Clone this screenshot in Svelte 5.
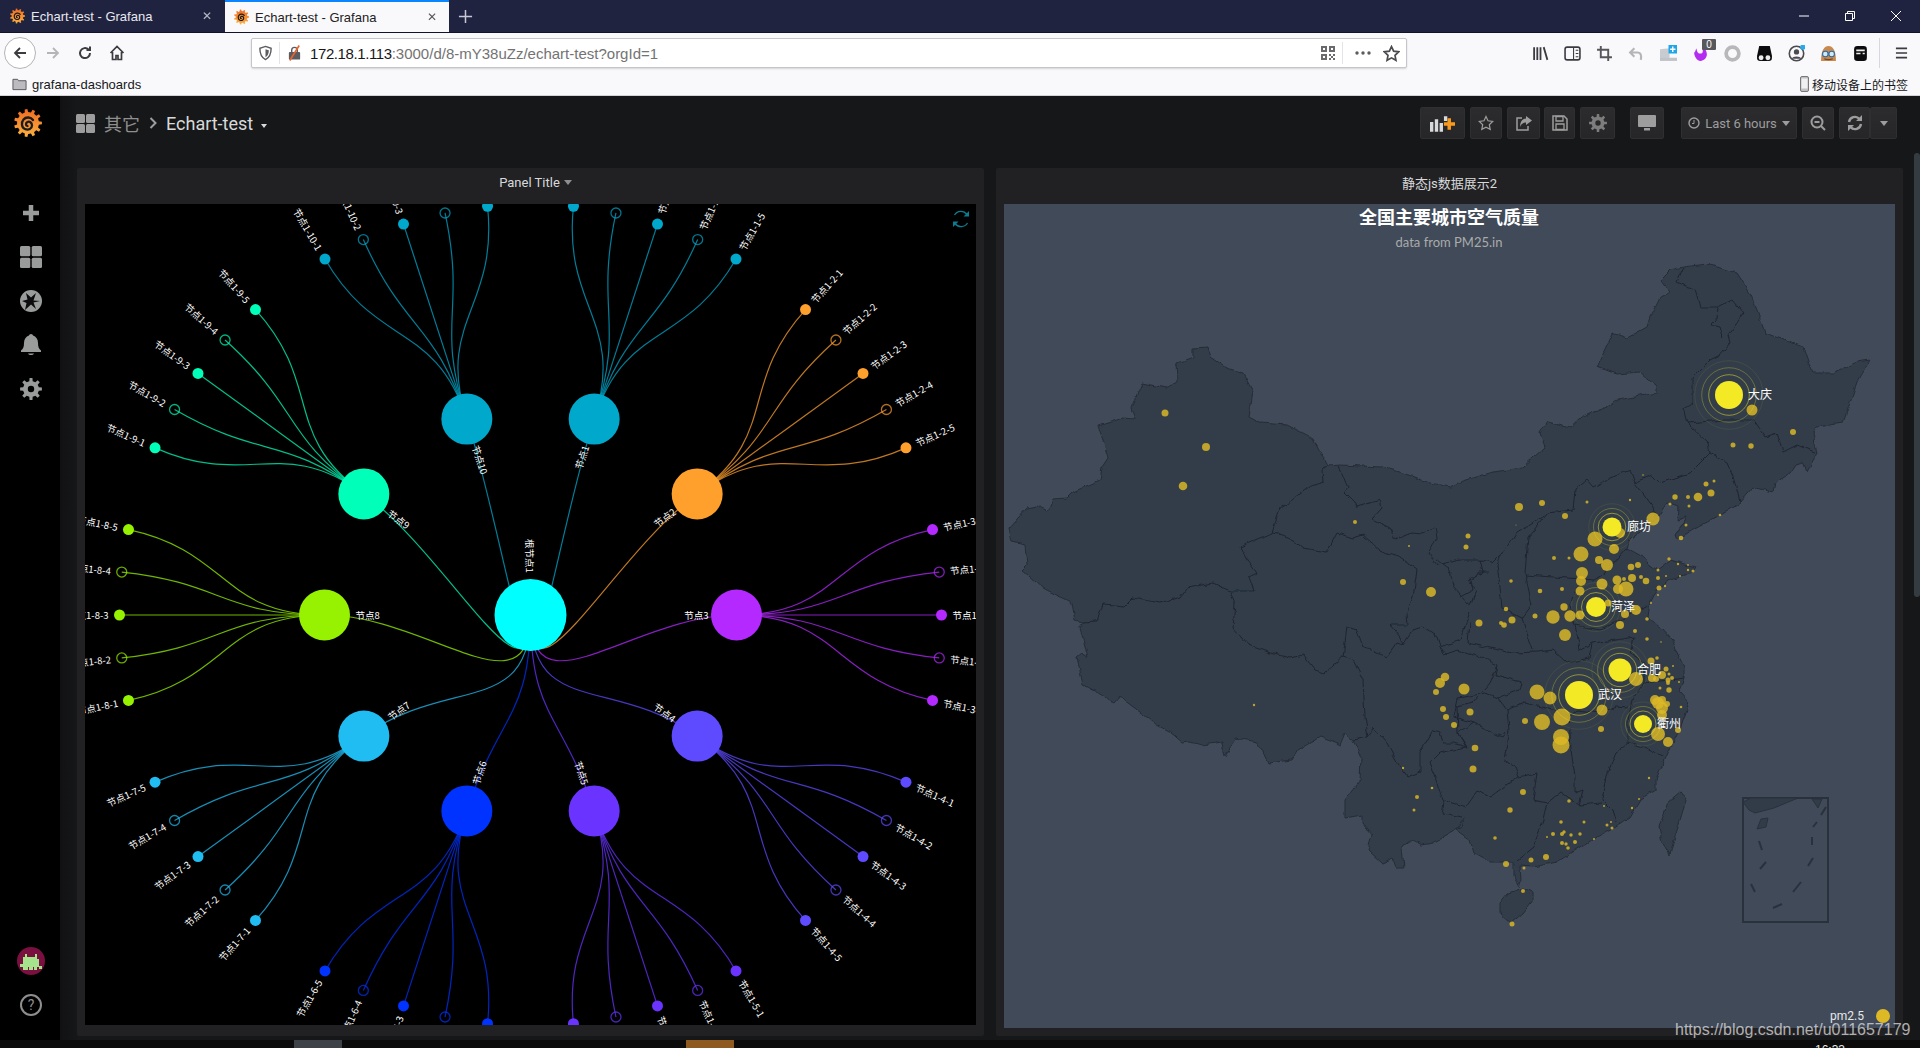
<script>
  // radial tree, same layout rules as the echarts one: 10 branches, 5 leaves each
  const cx = 530.5;
  const cy = 615;
  const colors = {
    1: '#00a8cc', 2: '#ffa02d', 3: '#b429ff', 4: '#5f4bff', 5: '#6a33ff',
    6: '#0033ff', 7: '#20bdf3', 8: '#96f200', 9: '#00ffb8', 10: '#00a8cc'
  };

  function polar(angle, r) {
    const rad = (angle * Math.PI) / 180;
    return [cx + r * Math.cos(rad), cy - r * Math.sin(rad)];
  }

  function labelAt(angle, r, name, inward) {
    const [x, y] = polar(angle, r);
    const left = Math.cos((angle * Math.PI) / 180) < 0;
    const rot = left ? 180 - angle : -angle;
    const anchor = left !== inward ? 'end' : 'start';
    return { x, y, rot, anchor, name };
  }

  function curve(a1, r1, a2, r2, startAngle) {
    const mid = (r1 + r2) / 2;
    const p0 = polar(a1, r1);
    const c1 = polar(startAngle, mid);
    const c2 = polar(a2, mid);
    const p1 = polar(a2, r2);
    return `M${p0} C${c1} ${c2} ${p1}`;
  }

  const branches = [];
  for (let i = 1; i <= 10; i++) {
    const angle = ((3 - i) * 36 + 360) % 360;
    const [x, y] = polar(angle, 206);
    const leaves = [];
    for (let j = 1; j <= 5; j++) {
      const a = angle + 12 - (j - 1) * 6;
      const [lx, ly] = polar(a, 411);
      leaves.push({
        x: lx, y: ly, hollow: j % 2 === 0,
        path: curve(angle, 206, a, 411, angle),
        label: labelAt(a, 422, `节点1-${i}-${j}`, false)
      });
    }
    const left = Math.cos((angle * Math.PI) / 180) < -0.5;
    branches.push({
      i, x, y, leaves, color: colors[i],
      path: `M${cx},${cy} C${cx},${cy + 103} ${polar(angle, 103)} ${x},${y}`,
      label: labelAt(angle, left ? 175 : 178, `节点${i}`, true)
    });
  }

  function gear(c, r1, r2, teeth, hole) {
    let d = '';
    const step = (Math.PI * 2) / teeth;
    for (let i = 0; i < teeth; i++) {
      const a = i * step;
      const pts = [[a - step * 0.27, r2], [a - step * 0.17, r1], [a + step * 0.17, r1], [a + step * 0.27, r2]];
      for (const [t, r] of pts) {
        d += (d ? 'L' : 'M') + (c + r * Math.cos(t)).toFixed(2) + ',' + (c + r * Math.sin(t)).toFixed(2);
      }
    }
    d += 'Z';
    if (hole) d += `M${c - hole},${c}a${hole},${hole} 0 1,0 ${hole * 2},0a${hole},${hole} 0 1,0 ${-hole * 2},0Z`;
    return d;
  }

  // map is traced in page coordinates, the svg viewBox starts at the chart corner
  const land = `1193,348 1208,347 1211,357 1227,368 1243,373 1253,392 1249,417 1260,423 1287,425 1313,438 1328,466 1340,465 1383,467 1403,473 1430,483 1450,487 1460,482 1493,472 1522,468 1545,447 1540,433 1547,422 1570,428 1582,417 1607,407 1617,400 1657,393 1657,387 1640,372 1617,374 1597,367 1613,333 1627,338 1647,327 1650,317 1660,297 1670,292 1660,280 1670,270 1683,267 1707,264 1737,273 1750,293 1757,310 1765,333 1803,347 1810,367 1813,373 1833,373 1857,362 1870,360 1857,383 1843,423 1817,427 1813,433 1817,453 1807,472 1803,463 1795,465 1790,473 1775,483 1773,492 1753,487 1740,502 1720,515 1693,530 1677,540 1675,535 1687,517 1677,520 1678,507 1667,503 1655,520 1630,540 1627,548 1643,557 1648,563 1657,570 1670,560 1697,567 1693,573 1673,578 1657,590 1650,603 1648,617 1663,630 1672,640 1685,667 1685,678 1679,692 1689,703 1681,727 1668,753 1656,780 1656,790 1640,800 1630,817 1616,827 1592,840 1557,862 1533,867 1520,866 1521,880 1519,887 1513,877 1513,862 1490,862 1474,853 1470,840 1456,830 1465,817 1462,827 1455,830 1433,843 1422,845 1413,840 1402,847 1404,868 1397,868 1393,858 1382,863 1368,850 1372,835 1362,823 1362,815 1345,818 1345,800 1360,780 1361,757 1353,740 1345,733 1340,745 1320,737 1298,750 1292,760 1268,763 1262,750 1257,742 1235,738 1225,757 1222,742 1203,745 1190,742 1183,743 1170,732 1157,725 1148,718 1128,703 1120,697 1115,703 1098,693 1083,685 1077,657 1082,653 1088,657 1080,628 1083,622 1075,620 1072,603 1043,588 1022,570 1027,565 1025,545 1012,542 1009,528 1027,508 1037,506 1048,511 1053,499 1067,498 1073,492 1100,480 1102,467 1108,458 1103,440 1098,426 1123,418 1135,419 1131,408 1142,383 1167,388 1178,382 1177,363 1193,357`;
  const taiwan = `1681,792 1687,797 1681,817 1672,847 1670,855 1662,842 1659,827 1668,803`;
  const hainan = `1523,888 1533,892 1533,900 1523,913 1511,923 1500,913 1500,903 1508,893`;

  const borders = [
    `1328,466 1323,470 1324,482 1310,486 1293,500 1280,508 1272,533 1240,547 1247,560 1257,573 1249,577 1254,591 1230,591 1213,583 1187,588 1180,597 1160,603 1133,598 1125,606 1103,604 1097,621 1083,622`,
    `1339,466 1348,488 1345,492 1355,502 1357,507 1380,500 1382,508 1372,519 1390,528 1395,540 1403,535 1413,532 1422,533 1435,528 1437,538 1428,553 1437,565 1460,560 1480,560 1493,562 1502,553 1517,533 1527,527 1548,513 1573,510 1575,490 1587,480 1593,487 1613,477 1630,470 1635,483 1652,475 1660,483 1690,473 1710,453 1708,443 1687,423 1683,408 1693,402 1693,377 1710,360 1720,355 1730,343 1728,335 1743,313 1732,300 1718,307 1700,307 1695,290 1677,282 1683,268`,
    `1718,307 1717,320 1712,325 1720,327 1723,337`,
    `1687,423 1725,420 1753,420 1765,437 1777,433 1783,452 1797,445 1817,453`,
    `1710,453 1727,463 1733,477 1737,490 1740,502`,
    `1635,483 1643,493 1653,507 1655,518`,
    `1272,533 1283,535 1293,540 1303,548 1327,552 1337,533 1353,538 1363,535 1380,550 1400,558 1417,570 1413,597 1407,613 1408,625 1390,625 1400,637 1403,645`,
    `1343,657 1347,627 1357,630 1363,647 1387,657 1397,643 1403,645 1413,630 1422,627 1437,637 1443,655 1458,650 1480,657 1498,665 1496,675 1521,682`,
    `1230,592 1235,603 1233,628 1248,645 1270,653 1290,658 1303,655 1315,670 1325,673 1343,657`,
    `1343,657 1353,660 1363,680 1365,717 1368,737 1373,727 1387,743 1400,767 1407,777 1420,772 1420,753 1433,730 1440,732 1443,743 1452,743 1467,747 1458,733 1457,707 1473,703 1490,683 1497,667`,
    `1368,737 1362,738 1353,740`,
    `1437,560 1450,570 1453,587 1467,603 1470,605 1477,590 1468,582 1480,572 1488,572`,
    `1470,612 1460,640 1440,647 1447,655`,
    `1480,560 1483,573 1470,577 1473,590 1460,597`,
    `1502,553 1497,565 1500,587 1502,608 1522,618`,
    `1548,513 1528,537 1525,573 1532,605 1522,618 1525,628 1533,650`,
    `1525,575 1568,578 1595,580 1603,575 1627,548`,
    `1577,587 1570,605 1575,625 1600,630 1650,605`,
    `1575,625 1580,650 1592,643`,
    `1470,623 1468,643 1512,653 1537,652 1553,650 1567,663 1589,658 1592,643 1616,640 1634,637 1630,653 1644,662 1644,683 1632,700 1628,720 1628,743`,
    `1507,710 1525,703 1553,710 1569,717 1577,710 1600,713 1616,707 1628,708`,
    `1521,682 1519,690 1498,698 1507,710 1509,730 1504,760 1515,767 1519,777 1537,773 1533,800 1547,803`,
    `1569,717 1571,750 1575,777 1575,793 1583,790 1579,805 1602,803`,
    `1628,743 1616,753 1606,777 1602,800 1612,810 1616,823`,
    `1628,743 1644,747 1656,753 1664,757`,
    `1547,803 1541,827 1533,847 1517,860`,
    `1547,803 1561,792 1579,805`,
    `1442,800 1466,807 1478,790 1490,797 1509,783 1519,777`,
    `1430,763 1444,803 1442,813 1462,817`,
    `1430,763 1440,753 1466,747 1458,733 1474,723 1502,737 1505,733`,
    `1458,698 1454,717 1474,723`,
    `1498,698 1486,693 1458,698`,
    `1644,683 1685,678`
  ];

  const insetShapes = [
    `1743,802 1751,798 1798,798 1774,808 1755,813 1749,810`,
    `1812,799 1822,799 1818,808`,
    `1761,819 1768,818 1766,827 1757,829`
  ];
  const insetDashes = [
    [1826, 807, 1821, 815], [1817, 822, 1813, 827], [1812, 837, 1812, 845], [1759, 841, 1762, 850],
    [1813, 858, 1808, 866], [1766, 862, 1760, 869], [1801, 882, 1793, 892], [1751, 884, 1755, 892], [1782, 904, 1773, 908]
  ];

  const dots = [
    [1165,413,3.5],[1206,447,4],[1183,486,4.3],[1355,522,2],[1409,546,1],[1403,582,3],[1431,592,5],[1479,623,3.5],
    [1445,677,4.3],[1440,683,5],[1436,692,3],[1464,689,5.5],[1443,709,3],[1470,712,3.5],[1446,717,3],[1454,725,3],
    [1475,748,3.3],[1473,769,3.5],[1403,768,1.2],[1432,788,1.3],[1417,797,2],[1414,810,1.5],[1495,838,1.8],[1254,705,1.2],
    [1752,410,5.5],[1793,432,3],[1751,446,2.7],[1733,445,2.5],[1706,484,2.5],[1714,481,1.5],[1711,493,3.5],[1698,497,4.3],
    [1688,497,2],[1675,497,2.7],[1670,504,1.5],[1689,506,1.5],[1720,515,1.3],[1686,525,1.5],[1681,538,2.3],[1653,519,6.5],
    [1630,500,1.2],[1643,475,0.8],[1587,502,1.5],[1542,503,3],[1519,507,4],[1565,516,3],[1516,525,0.5],[1468,536,2.5],
    [1466,547,2.5],[1620,533,5],[1595,539,7.5],[1614,549,5],[1581,554,7.5],[1554,558,2],[1569,558,1.5],[1599,560,4],
    [1607,565,6],[1631,567,3.3],[1638,565,3],[1582,573,6],[1581,581,5],[1511,581,1.8],[1602,584,5.5],[1617,580,4.5],
    [1624,579,2],[1632,578,4],[1641,577,2],[1646,581,3.3],[1658,570,1.5],[1658,578,2],[1666,576,1],[1669,559,1.7],
    [1678,564,1.2],[1688,565,0.9],[1688,570,1.2],[1693,571,1.5],[1680,576,1],[1659,588,2.5],[1665,586,1.2],[1658,595,1],
    [1626,589,7.5],[1618,589,5],[1580,591,4.5],[1562,589,2],[1540,591,2.3],[1506,609,2.2],[1501,623,2],[1504,625,2.8],
    [1512,620,3.5],[1535,616,2.5],[1564,607,3.7],[1553,617,6.7],[1570,616,5.7],[1580,615,4.5],[1608,603,3.5],[1636,610,5],
    [1625,614,4],[1651,603,1],[1647,619,1.8],[1620,625,4],[1635,631,2],[1565,635,6],[1647,639,1.8],[1661,642,0.8],
    [1537,692,7.5],[1550,698,6.5],[1562,717,8.5],[1542,722,8],[1525,721,3],[1602,710,5.5],[1601,729,3],[1561,737,8],
    [1561,745,8.5],[1636,679,7],[1651,661,3.5],[1657,658,1.8],[1673,666,1],[1666,669,2.5],[1662,675,4],[1652,678,4],
    [1656,679,3],[1669,674,1.5],[1668,680,2.5],[1672,678,2],[1668,683,2],[1679,682,1],[1660,688,1.5],[1669,690,2.7],
    [1655,700,5],[1658,703,6],[1662,700,4],[1667,704,3],[1681,707,1.3],[1662,708,6],[1662,715,5],[1658,734,7],
    [1668,742,5],[1678,730,3],[1649,778,1.2],[1639,799,1],[1632,808,1.2],[1604,806,1],[1569,801,1.8],[1523,792,3],
    [1510,810,2.7],[1561,822,1.8],[1584,822,1.5],[1607,825,1.5],[1611,822,1],[1612,828,1.5],[1594,839,1],[1564,832,1.7],
    [1562,834,2],[1553,834,2],[1547,837,1],[1571,835,1.7],[1580,834,1.7],[1562,843,2],[1566,844,1.7],[1575,842,2],
    [1568,848,1.8],[1546,857,3],[1531,860,2.5],[1506,864,3],[1524,868,1.5],[1523,891,2],[1512,924,2.5]
  ];

  const topCities = [
    { name: '大庆', x: 1729, y: 395, r: 14, lx: 1748 },
    { name: '廊坊', x: 1612, y: 527, r: 9.5, lx: 1627 },
    { name: '菏泽', x: 1596, y: 607, r: 10, lx: 1611 },
    { name: '合肥', x: 1620, y: 670, r: 11.5, lx: 1637 },
    { name: '武汉', x: 1579, y: 695, r: 14, lx: 1598 },
    { name: '衢州', x: 1643, y: 724, r: 9, lx: 1657 }
  ];

  const logoGear = gear(14, 14, 11, 11, 0);
  const settingsGear = gear(10, 10, 7.2, 8, 3);
  const sideGear = gear(11, 11, 8, 8, 3.2);
</script>

{#snippet logo(cls)}
  <svg class={cls} viewBox="0 0 28 28">
    <defs>
      <linearGradient id="gf" x1="0" y1="1" x2="0" y2="0">
        <stop offset="0" stop-color="#fbb040" />
        <stop offset="1" stop-color="#ee6b22" />
      </linearGradient>
    </defs>
    <path d={logoGear} fill="url(#gf)" />
    <path d="M19 11c-2-3-7-3.500-9.500-.5s-2 8 1.500 9.500 7-.5 7-3.500-2.500-4.500-4.500-3.500-2 3.500 0 4" fill="none" stroke="#1b1b1d" stroke-width="2.300" stroke-linecap="round" />
  </svg>
{/snippet}

<div class="page">
  <div class="tabbar">
    <div class="tab">
      {@render logo('favicon')}
      <span class="tab-title">Echart-test - Grafana</span>
      <span class="tab-x">✕</span>
    </div>
    <div class="tab active">
      {@render logo('favicon')}
      <span class="tab-title">Echart-test - Grafana</span>
      <span class="tab-x">✕</span>
    </div>
    <svg class="newtab" viewBox="0 0 16 16"><path d="M8 1v14M1 8h14" stroke="#c8c8d4" stroke-width="1.600" /></svg>
    <div class="winctl">
      <svg viewBox="0 0 12 12"><path d="M1 6h10" stroke="#fff" /></svg>
      <svg viewBox="0 0 12 12"><path d="M1.500 3.500h7v7h-7zM3.500 3.500v-2h7v7h-2" fill="none" stroke="#fff" /></svg>
      <svg viewBox="0 0 12 12"><path d="M1 1l10 10M11 1L1 11" stroke="#fff" /></svg>
    </div>
  </div>

  <div class="toolbar">
    <div class="back">
      <svg viewBox="0 0 16 16"><path d="M14 8H3M8 3L3 8l5 5" fill="none" stroke="#3b3b40" stroke-width="1.800" /></svg>
    </div>
    <div class="tb-btn">
      <svg viewBox="0 0 16 16"><path d="M2 8h11M8 3l5 5-5 5" fill="none" stroke="#b5b5b8" stroke-width="1.800" /></svg>
    </div>
    <div class="tb-btn">
      <svg viewBox="0 0 16 16"><path d="M13 8a5 5 0 1 1-1.500-3.500M13 1.500V5H9.500" fill="none" stroke="#3b3b40" stroke-width="2" /></svg>
    </div>
    <div class="tb-btn">
      <svg viewBox="0 0 16 16"><path d="M1.500 8L8 1.500 14.500 8M3.500 7v7.500h3.500v-4h2v4h3.500V7" fill="none" stroke="#3b3b40" stroke-width="1.700" /></svg>
    </div>

    <div class="urlbox">
      <svg class="shield" viewBox="0 0 16 16"><path d="M8 1l6 2c0 6-1.500 10-6 12C3.500 13 2 9 2 3z" fill="none" stroke="#5b5b60" stroke-width="1.500" /><path d="M8 4l3.500 1c0 3.500-1 6-3.500 7.500z" fill="#5b5b60" /></svg>
      <span class="url-sep"></span>
      <svg class="lock" viewBox="0 0 16 16"><rect x="2" y="7" width="12" height="8" rx="1" fill="#5b5b60" /><path d="M5 7V5a3 3 0 0 1 6 0v2" fill="none" stroke="#5b5b60" stroke-width="1.500" /><path d="M3 16L13 0" stroke="#e8642c" stroke-width="1.800" /></svg>
      <span class="url"><b>172.18.1.113</b>:3000/d/8-mY38uZz/echart-test?orgId=1</span>
      <svg class="qr" viewBox="0 0 14 14">
        <path d="M0 0h6v6H0zM2 2v2h2V2zM8 0h6v6H8zM10 2v2h2V2zM0 8h6v6H0zM2 10v2h2v-2zM8 8h2v2H8zM12 8h2v2h-2zM10 10h2v2h-2zM8 12h2v2H8zM12 12h2v2h-2z" fill="#6a6a6e" fill-rule="evenodd" />
      </svg>
      <span class="url-sep right"></span>
      <svg class="dots" viewBox="0 0 16 4"><circle cx="2" cy="2" r="1.700" fill="#5b5b60" /><circle cx="8" cy="2" r="1.700" fill="#5b5b60" /><circle cx="14" cy="2" r="1.700" fill="#5b5b60" /></svg>
      <svg class="star" viewBox="0 0 16 16"><path d="M8 1.500l2 4.300 4.700.6-3.400 3.300.9 4.700L8 12.100l-4.200 2.300.9-4.700L1.300 6.400 6 5.800z" fill="none" stroke="#4a4a4f" stroke-width="1.600" /></svg>
    </div>

    <div class="addons">
      <div class="addon"><svg viewBox="0 0 16 16"><path d="M2 2v12M5 2v12M8 2v12M11 2l3.500 12" stroke="#3b3b40" stroke-width="1.700" /></svg></div>
      <div class="addon"><svg viewBox="0 0 16 16"><rect x="1" y="2" width="14" height="12" rx="2" fill="none" stroke="#3b3b40" stroke-width="1.500" /><path d="M9 2v12M11 5h2.500M11 8h2.500M11 11h2.500" stroke="#3b3b40" /></svg></div>
      <div class="addon"><svg viewBox="0 0 16 16"><path d="M4.500 1v10.500H15M1 4.500h10.500V15" fill="none" stroke="#55555a" stroke-width="1.800" /></svg></div>
      <div class="addon"><svg viewBox="0 0 16 16"><path d="M6 3L2 7l4 4M2 7h7c3 0 4 3 3 7" fill="none" stroke="#b5b5b8" stroke-width="2" /></svg></div>
      <div class="addon"><svg viewBox="0 0 16 16"><path d="M0 4l9-1v10l-9 2z" fill="#c8ccd0" /><rect y="12" width="16" height="3" fill="#c0c4c8" /><rect x="8" width="8" height="8" fill="#1ea7e8" /><path d="M12 1.500v5M9.500 4h5" stroke="#fff" stroke-width="1.300" /></svg></div>
      <div class="addon badge-wrap">
        <svg viewBox="0 0 16 16"><path d="M2 7c1 0 1-1 2-4 1 3 1 5 4 5 3 0 2-3 2-6 2 1 4 3 4 7 0 3-3 6-6 6S2 11 2 7z" fill="#b32cf0" /></svg>
        <span class="badge">0</span>
      </div>
      <div class="addon"><svg viewBox="0 0 16 16"><circle cx="8" cy="8" r="6" fill="none" stroke="#b8b8ba" stroke-width="3.500" /></svg></div>
      <div class="addon"><svg viewBox="0 0 16 16"><path d="M3 1h10l2 9v2a3 3 0 0 1-3 3H4a3 3 0 0 1-3-3v-2z" fill="#0c0c0e" /><circle cx="4.800" cy="12" r="2.300" fill="#eee" /><circle cx="11.200" cy="12" r="2.300" fill="#eee" /></svg></div>
      <div class="addon avatar-wrap">
        <svg viewBox="0 0 16 16"><circle cx="8" cy="8" r="6.800" fill="none" stroke="#4a4a4f" stroke-width="1.500" /><circle cx="8" cy="6.500" r="2.500" fill="#4a4a4f" /><path d="M3.500 13c1-3 8-3 9 0" fill="#4a4a4f" /><circle cx="14" cy="2" r="2.500" fill="#2aa8ee" /></svg>
      </div>
      <div class="addon"><svg viewBox="0 0 16 16"><path d="M1 15c0-10 3-14 7-14s7 4 7 14z" fill="#c9884d" /><circle cx="5" cy="8.500" r="2.600" fill="#cfe9f7" stroke="#2b6ca8" /><circle cx="11" cy="8.500" r="2.600" fill="#cfe9f7" stroke="#2b6ca8" /><path d="M4 13c2 1 6 1 8 0" stroke="#7a4a20" fill="none" /></svg></div>
      <div class="addon"><svg viewBox="0 0 16 16"><rect x="2" y="1" width="12" height="14" rx="3" fill="#0c0c0e" /><path d="M4 5h8M4 8h4M10 8h2" stroke="#eee" stroke-width="1.600" /></svg></div>
    </div>
    <span class="tb-sep"></span>
    <svg class="burger" viewBox="0 0 14 14"><path d="M1 2h12M1 7h12M1 12h12" stroke="#3b3b40" stroke-width="1.800" /></svg>
  </div>

  <div class="bookmarks">
    <svg class="folder" viewBox="0 0 16 16"><path d="M1 3h5l1 1.500h8V14H1z" fill="#bcbcc0" stroke="#55555a" /></svg>
    <span class="bm">grafana-dashoards</span>
    <span class="spacer"></span>
    <svg class="phone" viewBox="0 0 9 16"><rect x="0.500" y="0.500" width="8" height="15" rx="1.500" fill="#c0c0c4" stroke="#77777c" /><rect x="1.500" y="2.500" width="6" height="10" fill="#f0f0f2" /></svg>
    <span class="bm mobile">移动设备上的书签</span>
  </div>

  <div class="app">
    <nav class="sidemenu">
      <div class="side-logo">{@render logo('gflogo')}</div>
      <div class="side-item"><svg viewBox="0 0 18 18"><path d="M9 1v16M1 9h16" stroke="#9a9c9c" stroke-width="4.500" /></svg></div>
      <div class="side-item"><svg class="big" viewBox="0 0 22 22"><rect width="10.300" height="10.300" rx="1.500" fill="#9a9c9c" /><rect x="11.700" width="10.300" height="10.300" rx="1.500" fill="#9a9c9c" /><rect y="11.700" width="10.300" height="10.300" rx="1.500" fill="#9a9c9c" /><rect x="11.700" y="11.700" width="10.300" height="10.300" rx="1.500" fill="#9a9c9c" /></svg></div>
      <div class="side-item"><svg class="big" viewBox="0 0 22 22"><circle cx="11" cy="11" r="11" fill="#9a9c9c" /><path d="M16 3l-2.500 7.500L20 11l-6.500 1.500L16 19l-5-4.500L5 20l1.500-7L2 11l5.500-1.500L6 3l5 4.500z" fill="#0c0c0e" /></svg></div>
      <div class="side-item"><svg class="big" viewBox="0 0 22 22"><path d="M11 0c1 0 2 1 2 1.500 3 1 5 3.500 5 7.500 0 4 1 6 3 7.500V18H1v-1.500C3 15 4 13 4 9c0-4 2-6.500 5-7.500C9 1 10 0 11 0zM8 19.500h6c-1 2-5 2-6 0z" fill="#9a9c9c" /></svg></div>
      <div class="side-item"><svg class="big" viewBox="0 0 22 22"><path d={sideGear} fill="#9a9c9c" fill-rule="evenodd" /></svg></div>
      <div class="side-item bottom">
        <svg class="avatar" viewBox="0 0 28 28">
          <ellipse cx="14" cy="14" rx="14" ry="14" fill="#7a1040" />
          <path d="M8 7h2v3h8V7h2v5h2v7h3v3h-3v-2h-2v3h-3v-3h-1v3h-4v-3h-1v3H6v-3H3v-3h3v-7h2z" fill="#a5e48c" />
        </svg>
      </div>
      <div class="side-item">
        <span class="help">?</span>
      </div>
    </nav>

    <main class="main">
      <header class="navbar">
        <div class="crumbs">
          <svg class="crumb-grid" viewBox="0 0 19 19"><rect width="9" height="9" rx="1.500" fill="#9d9d9d" /><rect x="10" width="9" height="9" rx="1.500" fill="#9d9d9d" /><rect y="10" width="9" height="9" rx="1.500" fill="#9d9d9d" /><rect x="10" y="10" width="9" height="9" rx="1.500" fill="#9d9d9d" /></svg>
          <span class="folder-name">其它</span>
          <svg class="chev" viewBox="0 0 8 12"><path d="M1.500 1l5 5-5 5" fill="none" stroke="#9d9d9d" stroke-width="2" /></svg>
          <span class="dash-name">Echart-test</span>
          <span class="caret-sm"></span>
        </div>
        <div class="nav-btns">
          <button class="nbtn w-add">
            <svg viewBox="0 0 26 18"><path d="M0 8h3.500v10H0zM5 5h3.500v13H5zM10 9h3.500v9H10zM14.500 2H18v5h-3.500z" fill="#d8d9da" /><path d="M20 4v12M14.500 10H26" stroke="#f79a1f" stroke-width="3.600" /></svg>
          </button>
          <button class="nbtn w-star"><svg viewBox="0 0 16 16"><path d="M8 1.500l2 4.300 4.700.6-3.400 3.300.9 4.700L8 12.100l-4.200 2.300.9-4.700L1.300 6.400 6 5.800z" fill="none" stroke="#9d9d9d" stroke-width="1.200" /></svg></button>
          <button class="nbtn w-share"><svg viewBox="0 0 16 16"><path d="M6 3H1v12h11v-4" fill="none" stroke="#9d9d9d" stroke-width="1.500" /><path d="M10 1l6 4.500L10 10V7.500C7 7.500 5 9 4 12c0-5 2-8 6-8.500z" fill="#9d9d9d" /></svg></button>
          <button class="nbtn w-save"><svg viewBox="0 0 16 16"><path d="M1 1h11l3 3v11H1z" fill="none" stroke="#9d9d9d" stroke-width="1.500" /><path d="M4 1.500h7V6H4zM4 9h8v5.500H4z" fill="none" stroke="#9d9d9d" stroke-width="1.300" /></svg></button>
          <button class="nbtn w-gear"><svg viewBox="0 0 20 20"><path d={settingsGear} fill="#7d7d7d" fill-rule="evenodd" /></svg></button>
          <button class="nbtn w-tv"><svg viewBox="0 0 18 16"><rect width="18" height="12" rx="1" fill="#9d9d9d" /><path d="M6 13h6v2.500H6z" fill="#9d9d9d" /></svg></button>
          <button class="nbtn w-time">
            <svg viewBox="0 0 12 12"><circle cx="6" cy="6" r="5" fill="none" stroke="#9d9d9d" stroke-width="1.400" /><path d="M6 3v3.500H4" fill="none" stroke="#9d9d9d" /></svg>
            <span>Last 6 hours</span>
            <span class="caret"></span>
          </button>
          <button class="nbtn w-zoom"><svg viewBox="0 0 16 16"><circle cx="7" cy="7" r="5.500" fill="none" stroke="#9d9d9d" stroke-width="2" /><path d="M4.500 7h5M11 11l4 4" stroke="#9d9d9d" stroke-width="2" /></svg></button>
          <div class="refresh-group">
            <button class="nbtn w-refresh"><svg viewBox="0 0 16 16"><path d="M2 7a6 6 0 0 1 10.500-3M14 9a6 6 0 0 1-10.500 3" fill="none" stroke="#9d9d9d" stroke-width="2.400" /><path d="M15 0v6H9zM1 16v-6h6z" fill="#9d9d9d" /></svg></button>
            <button class="nbtn w-drop"><span class="caret"></span></button>
          </div>
        </div>
      </header>

      <div class="panels">
        <section class="panel">
          <div class="panel-head menu">Panel Title <span class="caret-head"></span></div>
          <svg class="tree" viewBox="85 204 891 821">
            {#each branches as b}
              <path class="link" d={b.path} stroke={b.color} />
              {#each b.leaves as l}
                <path class="link" d={l.path} stroke={b.color} />
              {/each}
            {/each}
            {#each branches as b}
              <circle cx={b.x} cy={b.y} r="25.500" fill={b.color} />
              <text class="lbl" text-anchor={b.label.anchor} transform="translate({b.label.x} {b.label.y}) rotate({b.label.rot})">{b.label.name}</text>
              {#each b.leaves as l}
                {#if l.hollow}
                  <circle class="hollow" cx={l.x} cy={l.y} r="5" stroke={b.color} />
                {:else}
                  <circle cx={l.x} cy={l.y} r="5.500" fill={b.color} />
                {/if}
                <text class="lbl" text-anchor={l.label.anchor} transform="translate({l.label.x} {l.label.y}) rotate({l.label.rot})">{l.label.name}</text>
              {/each}
            {/each}
            <circle cx={cx} cy={cy} r="36" fill="#00ffff" />
            <text class="lbl" transform="translate(530 539) rotate(90)">根节点1</text>
            <g class="refresh-ico">
              <path d="M954.500 215A7.500 7.500 0 0 1 967 214.500M967.500 223A7.500 7.500 0 0 1 955 223.500" />
              <path class="tip" d="M969 211v5.500h-5.500zM953 227v-5.500h5.500z" />
            </g>
          </svg>
        </section>

        <section class="panel">
          <div class="panel-head">静态js数据展示2</div>
          <svg class="map" viewBox="1004 204 891 824">
            <defs>
              <filter id="rough" filterUnits="userSpaceOnUse" x="1004" y="204" width="891" height="824">
                <feTurbulence type="fractalNoise" baseFrequency="0.11" numOctaves="2" seed="4" />
                <feDisplacementMap in="SourceGraphic" scale="5" xChannelSelector="R" yChannelSelector="G" />
              </filter>
            </defs>
            <g filter="url(#rough)">
              <polygon class="land" points={land} />
              <polygon class="land" points={taiwan} />
              <polygon class="land" points={hainan} />
              {#each borders as b}
                <polyline class="border" points={b} />
              {/each}
            </g>
            <rect class="inset" x="1743" y="798" width="85" height="124" />
            {#each insetShapes as s}
              <polygon class="inset-fill" points={s} />
            {/each}
            {#each insetDashes as [x1, y1, x2, y2]}
              <line class="inset-dash" {x1} {y1} {x2} {y2} />
            {/each}
            {#each dots as [x, y, r]}
              <circle class="dot" cx={x} cy={y} {r} />
            {/each}
            {#each topCities as c}
              <circle class="ring r1" cx={c.x} cy={c.y} r={c.r * 1.45} />
              <circle class="ring r2" cx={c.x} cy={c.y} r={c.r * 1.95} />
              <circle class="ring r3" cx={c.x} cy={c.y} r={c.r * 2.45} />
              <circle class="top" cx={c.x} cy={c.y} r={c.r} />
              <text class="city" x={c.lx} y={c.y}>{c.name}</text>
            {/each}
            <text class="map-title" x="1449" y="217">全国主要城市空气质量</text>
            <text class="map-sub" x="1449" y="242">data from PM25.in</text>
            <text class="legend" x="1830" y="1016">pm2.5</text>
            <circle class="legend-dot" cx="1883" cy="1016" r="7" />
          </svg>
        </section>
      </div>
    </main>
  </div>

  <div class="taskbar">
    <span class="seg gray"></span>
    <span class="seg orange"></span>
    <span class="clock">16:33</span>
  </div>

  <div class="scroll-thumb"></div>
  <div class="watermark">https://blog.csdn.net/u011657179</div>
</div>

<style>
  :global(body) {
    margin: 0;
    background: #161719;
    overflow: hidden;
  }

  .page {
    position: relative;
    width: 1920px;
    height: 1048px;
    overflow: hidden;
    display: flex;
    flex-direction: column;
    font-family: "Liberation Sans", "Noto Sans CJK SC", sans-serif;
  }

  /* browser chrome */
  .tabbar {
    height: 33px;
    flex: none;
    display: flex;
    align-items: stretch;
    background: #202340;
    border-bottom: 1px solid #12132a;
    box-sizing: border-box;
  }

  .tab {
    width: 224px;
    display: flex;
    align-items: center;
    padding-left: 10px;
    box-sizing: border-box;
    color: #e8e8ee;
    font-size: 13px;
  }

  .tab.active {
    background: #f9f9fb;
    color: #222;
    border-top: 2px solid #0a84ff;
    margin-left: 1px;
    padding-left: 9px;
  }

  .favicon {
    width: 15px;
    height: 16px;
    flex: none;
    margin-right: 6px;
  }

  .tab-title {
    flex: 1;
    white-space: nowrap;
  }

  .tab-x {
    width: 34px;
    font-size: 12px;
    text-align: center;
    opacity: 0.75;
  }

  .newtab {
    width: 15px;
    height: 15px;
    margin: 9px 0 0 9px;
  }

  .winctl {
    margin-left: auto;
    display: flex;
    gap: 34px;
    padding: 10px 18px 0 0;
  }

  .winctl svg {
    width: 12px;
    height: 12px;
  }

  .toolbar {
    height: 40px;
    flex: none;
    display: flex;
    align-items: center;
    background: #f9f9fb;
    padding-left: 4px;
    box-sizing: border-box;
  }

  .back {
    width: 32px;
    height: 32px;
    box-sizing: border-box;
    border: 1px solid #b4b4b8;
    border-radius: 50%;
    background: #fff;
    display: flex;
    align-items: center;
    justify-content: center;
    margin-right: 1px;
  }

  .back svg,
  .tb-btn svg {
    width: 16px;
    height: 16px;
  }

  .tb-btn {
    width: 32px;
    display: flex;
    justify-content: center;
  }

  .urlbox {
    width: 1156px;
    height: 30px;
    margin-left: 118px;
    box-sizing: border-box;
    background: #fff;
    border: 1px solid #c6c6ca;
    border-radius: 2px;
    box-shadow: 0 1px 2px rgba(0, 0, 0, 0.15);
    display: flex;
    align-items: center;
    padding: 0 6px 0 6px;
  }

  .shield,
  .lock {
    width: 15px;
    height: 16px;
    flex: none;
  }

  .url-sep {
    width: 1px;
    height: 22px;
    background: #e4e4e6;
    margin: 0 7px 0 6px;
  }

  .url-sep.right {
    margin: 0 12px 0 7px;
  }

  .url {
    margin-left: 8px;
    flex: 1;
    font-size: 15px;
    color: #737373;
    white-space: nowrap;
  }

  .url b {
    font-weight: 400;
    color: #17171a;
    letter-spacing: -0.4px;
  }

  .qr {
    width: 14px;
    height: 14px;
  }

  .dots {
    width: 16px;
    height: 4px;
    margin-right: 12px;
  }

  .star {
    width: 17px;
    height: 17px;
  }

  .addons {
    margin-left: 117px;
    display: flex;
  }

  .addon {
    width: 32px;
    display: flex;
    justify-content: center;
    position: relative;
  }

  .addon svg {
    width: 17px;
    height: 17px;
  }

  .badge {
    position: absolute;
    left: 18px;
    top: -6px;
    width: 14px;
    height: 11px;
    background: #58585c;
    color: #fff;
    font-size: 10px;
    line-height: 11px;
    text-align: center;
    border-radius: 1px;
  }

  .tb-sep {
    width: 1px;
    height: 30px;
    background: #d8d8dc;
    margin-left: 3px;
  }

  .burger {
    width: 13px;
    height: 14px;
    margin-left: 15px;
  }

  .bookmarks {
    height: 23px;
    flex: none;
    background: #f9f9fb;
    border-bottom: 1px solid #d4d4d8;
    box-sizing: border-box;
    display: flex;
    align-items: center;
    padding: 0 12px 0 12px;
  }

  .folder {
    width: 15px;
    height: 16px;
    margin-right: 5px;
  }

  .bm {
    font-size: 13px;
    color: #17171a;
  }

  .bm.mobile {
    font-size: 12px;
  }

  .spacer {
    flex: 1;
  }

  .phone {
    width: 9px;
    height: 16px;
    margin-right: 3px;
  }

  /* grafana */
  .app {
    flex: 1;
    min-height: 0;
    display: flex;
  }

  .sidemenu {
    width: 60px;
    flex: none;
    background: #000;
    display: flex;
    flex-direction: column;
    align-items: center;
    padding: 0 0 13px 2px;
    box-sizing: border-box;
  }

  .side-logo {
    height: 95px;
    margin-left: -6px;
    padding-top: 12px;
    box-sizing: border-box;
  }

  .gflogo {
    width: 28px;
    height: 30px;
  }

  .side-item {
    height: 44px;
    flex: none;
    display: flex;
    align-items: center;
    justify-content: center;
  }

  .side-item.bottom {
    margin-top: auto;
  }

  .side-item svg {
    width: 18px;
    height: 18px;
  }

  .side-item svg.big {
    width: 22px;
    height: 22px;
  }

  .side-item svg.avatar {
    width: 28px;
    height: 28px;
  }

  .help {
    width: 22px;
    height: 22px;
    box-sizing: border-box;
    border: 2px solid #8e8e8e;
    border-radius: 50%;
    color: #8e8e8e;
    font-size: 14px;
    line-height: 18px;
    text-align: center;
    font-family: Roboto, sans-serif;
  }

  .main {
    flex: 1;
    min-width: 0;
    background: linear-gradient(90deg, #111113 0, #161719 17px);
    padding-left: 17px;
    font-family: Roboto, "Noto Sans CJK SC", sans-serif;
  }

  .navbar {
    height: 72px;
    box-sizing: border-box;
    padding: 11px 23px 0 0;
    display: flex;
    justify-content: space-between;
    align-items: flex-start;
  }

  .crumbs {
    height: 32px;
    margin-left: -1px;
    display: flex;
    align-items: center;
    font-size: 18px;
  }

  .crumb-grid {
    width: 19px;
    height: 19px;
  }

  .folder-name {
    color: #8f8f8f;
    margin-left: 9px;
  }

  .chev {
    width: 8px;
    height: 12px;
    margin: 0 9px 0 9px;
  }

  .dash-name {
    color: #d8d9da;
  }

  .caret-sm {
    width: 0;
    height: 0;
    margin: 5px 0 0 8px;
    border: 3px solid transparent;
    border-top: 4px solid #d8d9da;
    border-bottom: 0;
  }

  .nav-btns {
    display: flex;
    gap: 5px;
  }

  .nbtn {
    height: 32px;
    padding: 0;
    box-sizing: border-box;
    background: linear-gradient(#2c2c2f, #262628);
    border: 1px solid #2f2f32;
    border-radius: 2px;
    color: #9d9d9d;
    display: flex;
    align-items: center;
    justify-content: center;
    font-family: Roboto, sans-serif;
    font-size: 13px;
  }

  .nbtn svg {
    width: 16px;
    height: 16px;
  }

  .w-add { width: 45px; }
  .w-add svg { width: 25px; height: 18px; }
  .w-star { width: 32px; }
  .w-share { width: 33px; }
  .w-save { width: 31px; margin-left: -1px; }
  .w-gear { width: 35px; }
  .w-gear svg { width: 18px; height: 18px; }
  .w-tv { width: 34px; margin-left: 10px; }
  .w-tv svg { width: 18px; height: 16px; }
  .w-time { width: 116px; margin-left: 12px; gap: 5px; }
  .w-time svg { width: 12px; height: 12px; }
  .w-zoom { width: 32px; }
  .w-refresh { width: 31px; }
  .w-drop { width: 27px; }

  .refresh-group {
    display: flex;
  }

  .caret {
    width: 0;
    height: 0;
    border: 4px solid transparent;
    border-top: 5px solid #9d9d9d;
    border-bottom: 0;
  }

  .panels {
    display: flex;
    gap: 12px;
  }

  .panel {
    width: 907px;
    height: 868px;
    box-sizing: border-box;
    padding: 0 8px;
    background: #212124;
    border-radius: 2px;
  }

  .panel-head {
    height: 29px;
    margin-bottom: 7px;
    display: flex;
    align-items: center;
    justify-content: center;
    gap: 4px;
    font-size: 13px;
    color: #d8d9da;
  }

  .panel-head.menu {
    padding-left: 10px;
  }

  .caret-head {
    width: 0;
    height: 0;
    border: 4px solid transparent;
    border-top: 5px solid #8e8e8e;
    border-bottom: 0;
  }

  .tree {
    display: block;
    width: 891px;
    height: 821px;
    background: #000;
  }

  .link {
    fill: none;
    stroke-width: 1.2;
    stroke-opacity: 0.75;
  }

  .hollow {
    fill: none;
    stroke-width: 1.3;
    stroke-opacity: 0.7;
  }

  .lbl {
    fill: #fff;
    font-size: 9.5px;
    font-family: "Noto Sans CJK SC", "Liberation Sans", sans-serif;
    dominant-baseline: central;
  }

  .refresh-ico path {
    fill: none;
    stroke: #0a7d8f;
    stroke-width: 1.3;
  }

  .refresh-ico path.tip {
    fill: #0a7d8f;
    stroke: none;
  }

  .map {
    display: block;
    width: 891px;
    height: 824px;
    background: #404a59;
  }

  .land {
    fill: #323c48;
    stroke: #252c37;
    stroke-width: 1;
  }

  .border {
    fill: none;
    stroke: #1f2530;
    stroke-width: 1;
  }

  .inset {
    fill: none;
    stroke: #29313d;
    stroke-width: 2;
  }

  .inset-fill {
    fill: #323c48;
    stroke: #29313d;
  }

  .inset-dash {
    stroke: #29313d;
    stroke-width: 2;
  }

  .dot {
    fill: #ddb926;
    fill-opacity: 0.82;
  }

  .top {
    fill: #f4e925;
  }

  .ring {
    fill: none;
    stroke: #f4e925;
    stroke-width: 1;
  }

  .r1 { stroke-opacity: 0.5; }
  .r2 { stroke-opacity: 0.28; }
  .r3 { stroke-opacity: 0.08; }

  .city {
    fill: #fff;
    font-size: 12px;
    dominant-baseline: central;
  }

  .map-title {
    fill: #fff;
    font-size: 18px;
    font-weight: 700;
    text-anchor: middle;
    dominant-baseline: central;
  }

  .map-sub {
    fill: #aaa;
    font-size: 13px;
    font-family: Lato, sans-serif;
    text-anchor: middle;
    dominant-baseline: central;
  }

  .legend {
    fill: #e8e8e8;
    font-size: 12px;
    dominant-baseline: central;
  }

  .legend-dot {
    fill: #ddb926;
  }

  .taskbar {
    height: 8px;
    flex: none;
    background: #0b0b0c;
    display: flex;
    overflow: hidden;
  }

  .seg {
    height: 8px;
    width: 48px;
  }

  .seg.gray {
    margin-left: 294px;
    background: #3d4248;
  }

  .seg.orange {
    margin-left: 344px;
    background: #8f5a1f;
  }

  .clock {
    margin-left: 1081px;
    padding-top: 4px;
    color: #e8e8e8;
    font-size: 12px;
    line-height: 12px;
  }

  .scroll-thumb {
    position: absolute;
    left: 1914px;
    top: 153px;
    width: 6px;
    height: 444px;
    background: #343c42;
    border-radius: 3px;
  }

  .watermark {
    position: absolute;
    left: 1675px;
    top: 1021px;
    color: rgba(232, 232, 232, 0.72);
    font-size: 16px;
    font-family: "Liberation Sans", sans-serif;
    white-space: nowrap;
  }
</style>
